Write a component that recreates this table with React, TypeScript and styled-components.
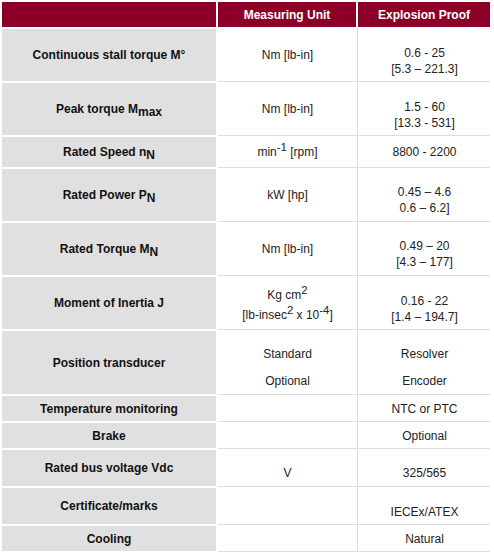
import React from "react";
import styled, { createGlobalStyle } from "styled-components";

const Global = createGlobalStyle`
  html, body { margin: 0; padding: 0; background: #fff; }
  body { font-family: "Liberation Sans", Arial, sans-serif; font-size: 12px; }
  * { box-sizing: border-box; }
`;

const Table = styled.div`
  padding: 2px 0 0 2px;
  width: 492px;
`;

const Row = styled.div<{ $h: number }>`
  display: grid;
  grid-template-columns: 216px 140px 132px;
  height: ${(p) => p.$h}px;
`;

const HeadCell = styled.div<{ $last?: boolean }>`
  background: #8c0027;
  color: #fff;
  font-weight: bold;
  display: flex;
  align-items: center;
  justify-content: center;
  border-right: ${(p) => (p.$last ? "0" : "2px solid #fff")};
  border-bottom: 1px solid #fff;
`;

const BaseCell = styled.div<{ $shift?: number }>`
  display: flex;
  flex-direction: column;
  align-items: center;
  justify-content: center;
  text-align: center;
  border-top: 1px solid #fff;
  padding-top: ${(p) => (p.$shift ? p.$shift * 2 : 0)}px;
  line-height: 16px;
`;

const LabelCell = styled(BaseCell)`
  background: #e0e0e0;
  color: #111;
  font-weight: bold;
  border-bottom: 1px solid #fff;
  border-right: 2px solid #fff;
`;

const UnitCell = styled(BaseCell)`
  color: #222;
  border-bottom: 1px solid #dcdcdc;
  border-right: 1px solid #dcdcdc;
`;

const ValueCell = styled(BaseCell)`
  color: #222;
  border-bottom: 1px solid #dcdcdc;
  border-left: 1px solid #fff;
`;

const Line = styled.span`
  display: block;
`;

const Para = styled.span`
  display: block;
  line-height: 14px;
  & + & { margin-top: 13px; }
`;

const Sub = styled.sub`
  font-size: 1em;
  vertical-align: -3px;
  line-height: 0;
`;

const Sup = styled.sup`
  font-size: 0.95em;
  vertical-align: 5px;
  line-height: 0;
`;

type RowData = {
  h: number;
  label: React.ReactNode;
  unit: React.ReactNode;
  value: React.ReactNode;
  unitShift?: number;
  valueShift?: number;
};

const rows: RowData[] = [
  {
    h: 54,
    label: "Continuous stall torque M°",
    unit: "Nm [lb-in]",
    value: (
      <>
        <Line>0.6 - 25</Line>
        <Line>[5.3 – 221.3]</Line>
      </>
    ),
    valueShift: 6,
  },
  {
    h: 54,
    label: (
      <span>
        Peak torque M<Sub>max</Sub>
      </span>
    ),
    unit: "Nm [lb-in]",
    value: (
      <>
        <Line>1.5 - 60</Line>
        <Line>[13.3 - 531]</Line>
      </>
    ),
    valueShift: 6,
  },
  {
    h: 32,
    label: (
      <span>
        Rated Speed n<Sub>N</Sub>
      </span>
    ),
    unit: (
      <span>
        min<Sup>-1</Sup> [rpm]
      </span>
    ),
    value: "8800 - 2200",
  },
  {
    h: 54,
    label: (
      <span>
        Rated Power P<Sub>N</Sub>
      </span>
    ),
    unit: "kW [hp]",
    value: (
      <>
        <Line>0.45 – 4.6</Line>
        <Line>0.6 – 6.2]</Line>
      </>
    ),
    valueShift: 5,
  },
  {
    h: 54,
    label: (
      <span>
        Rated Torque M<Sub>N</Sub>
      </span>
    ),
    unit: "Nm [lb-in]",
    value: (
      <>
        <Line>0.49 – 20</Line>
        <Line>[4.3 – 177]</Line>
      </>
    ),
    valueShift: 5,
  },
  {
    h: 54,
    label: "Moment of Inertia J",
    unit: (
      <>
        <Line>
          Kg cm<Sup>2</Sup>
        </Line>
        <Line style={{ marginTop: 4 }}>
          [lb-insec<Sup>2</Sup> x 10<Sup>-4</Sup>]
        </Line>
      </>
    ),
    value: (
      <>
        <Line>0.16 - 22</Line>
        <Line>[1.4 – 194.7]</Line>
      </>
    ),
    unitShift: 2,
    valueShift: 6,
  },
  {
    h: 65,
    label: "Position transducer",
    unit: (
      <>
        <Para>Standard</Para>
        <Para>Optional</Para>
      </>
    ),
    value: (
      <>
        <Para>Resolver</Para>
        <Para>Encoder</Para>
      </>
    ),
    unitShift: 5,
    valueShift: 5,
  },
  { h: 27, label: "Temperature monitoring", unit: "", value: "NTC or PTC" },
  { h: 27, label: "Brake", unit: "", value: "Optional" },
  {
    h: 38,
    label: "Rated bus voltage Vdc",
    unit: "V",
    value: "325/565",
    unitShift: 5,
    valueShift: 5,
  },
  {
    h: 38,
    label: "Certificate/marks",
    unit: "",
    value: "IECEx/ATEX",
    valueShift: 6,
  },
  { h: 27, label: "Cooling", unit: "", value: "Natural" },
];

export default function App() {
  return (
    <>
      <Global />
      <Table>
        <Row $h={26}>
          <HeadCell />
          <HeadCell>Measuring Unit</HeadCell>
          <HeadCell $last>Explosion Proof</HeadCell>
        </Row>
        {rows.map((r, i) => (
          <Row $h={r.h} key={i}>
            <LabelCell>{r.label}</LabelCell>
            <UnitCell $shift={r.unitShift}>{r.unit}</UnitCell>
            <ValueCell $shift={r.valueShift}>{r.value}</ValueCell>
          </Row>
        ))}
      </Table>
    </>
  );
}
